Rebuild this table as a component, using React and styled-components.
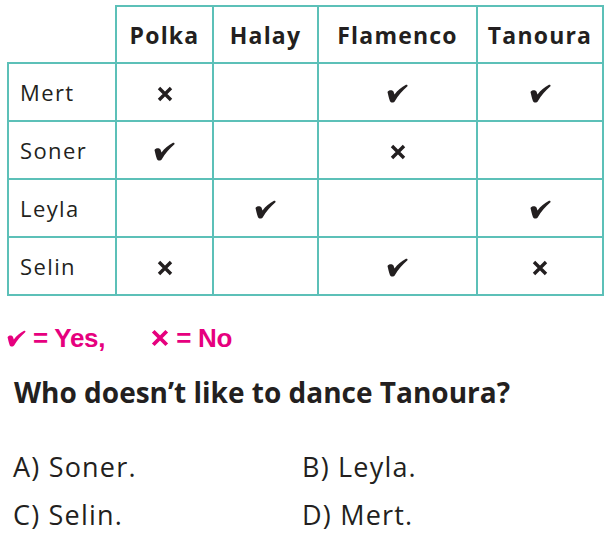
import React from 'react';
import styled, { createGlobalStyle } from 'styled-components';

const teal = '#5cc0b8';
const pink = '#e6007e';
const ink = '#231f20';

const GlobalStyle = createGlobalStyle`
  body {
    margin: 0;
    background: #fff;
    color: ${ink};
    font-family: 'Open Sans', 'Noto Sans', sans-serif;
  }
`;

const Page = styled.div`
  width: 607px;
  height: 543px;
  padding: 5px 0 0 7px;
  box-sizing: border-box;
`;

const Table = styled.table`
  border-collapse: collapse;
  table-layout: fixed;
  width: 595px;
`;

const HeadCell = styled.th`
  height: 55px;
  border: 2px solid ${teal};
  font-size: 23px;
  font-weight: 700;
  letter-spacing: 1.2px;
  text-align: center;
  padding: 0;
  ${(p) => p.$corner && `border-top: none; border-left: none;`}
`;

const NameCell = styled.td`
  height: 56px;
  border: 2px solid ${teal};
  font-size: 22px;
  letter-spacing: 1.4px;
  padding: 0 0 0 11px;
  text-align: left;
`;

const MarkCell = styled.td`
  border: 2px solid ${teal};
  text-align: center;
  padding: 0;
`;

const Check = ({ color = ink, w = 21, h = 19 }) => (
  <svg width={w} height={h} viewBox="0 0 21 19" style={{ verticalAlign: 'middle' }}>
    <path
      d="M0.5 8 C1.5 6 5 5.5 6.5 7.5 L7.5 10.5 C10.5 6.5 14.5 3 19 0.8 C20.3 0.4 21 1.6 20.2 2.4 C15.5 6.5 11 11.5 8 17 C7 18.8 4 19.2 3 17.3 C2 14.5 1.2 11 0.5 8 Z"
      fill={color}
    />
  </svg>
);

const Cross = ({ color = ink, size = 16 }) => (
  <svg width={size} height={size} viewBox="0 0 16 16" style={{ verticalAlign: 'middle' }}>
    <path d="M2 2 L14 14 M14 2 L2 14" stroke={color} strokeWidth="3.4" strokeLinecap="butt" />
  </svg>
);

const Legend = styled.div`
  margin-top: 27px;
  display: flex;
  align-items: center;
  color: ${pink};
  font-family: 'Liberation Sans', 'Arial', sans-serif;
  font-weight: 700;
  font-size: 26px;
  line-height: 30px;
  letter-spacing: -0.3px;
`;

const LegendItem = styled.span`
  display: inline-flex;
  align-items: center;
  gap: 7px;
  margin-right: ${(p) => p.$gap || 0}px;
`;

const Question = styled.div`
  margin-top: 22px;
  padding-left: 7px;
  font-size: 28px;
  line-height: 34px;
  font-weight: 700;
`;

const Options = styled.div`
  margin-top: 41px;
  padding-left: 6px;
  display: grid;
  grid-template-columns: 289px 1fr;
  row-gap: 14px;
  font-size: 27px;
  line-height: 34px;
  letter-spacing: 1.2px;
`;

const cols = ['Polka', 'Halay', 'Flamenco', 'Tanoura'];
const widths = [108, 97, 105, 159, 126];
const rows = [
  ['Mert', ['x', '', 'v', 'v']],
  ['Soner', ['v', '', 'x', '']],
  ['Leyla', ['', 'v', '', 'v']],
  ['Selin', ['x', '', 'v', 'x']],
];

const Mark = ({ v }) => (v === 'v' ? <Check /> : v === 'x' ? <Cross /> : null);

export default function App() {
  return (
    <Page>
      <GlobalStyle />
      <Table>
        <colgroup>
          {widths.map((w, i) => (
            <col key={i} style={{ width: w }} />
          ))}
        </colgroup>
        <thead>
          <tr>
            <HeadCell $corner />
            {cols.map((c) => (
              <HeadCell key={c}>{c}</HeadCell>
            ))}
          </tr>
        </thead>
        <tbody>
          {rows.map(([name, marks]) => (
            <tr key={name}>
              <NameCell>{name}</NameCell>
              {marks.map((m, i) => (
                <MarkCell key={i}>
                  <Mark v={m} />
                </MarkCell>
              ))}
            </tr>
          ))}
        </tbody>
      </Table>
      <Legend>
        <LegendItem $gap={46}>
          <Check color={pink} w={19} h={17} />= Yes,
        </LegendItem>
        <LegendItem>
          <Cross color={pink} size={18} />= No
        </LegendItem>
      </Legend>
      <Question>Who doesn’t like to dance Tanoura?</Question>
      <Options>
        <span>A) Soner.</span>
        <span>B) Leyla.</span>
        <span>C) Selin.</span>
        <span>D) Mert.</span>
      </Options>
    </Page>
  );
}
